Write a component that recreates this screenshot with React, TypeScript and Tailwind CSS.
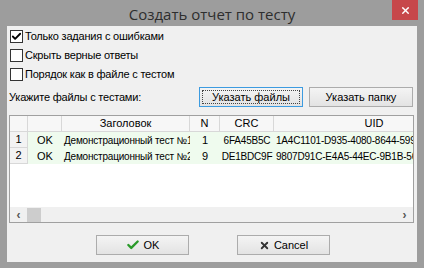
import { Check, X } from "lucide-react"

function CheckRow({ label, checked }: { label: string; checked?: boolean }) {
  return (
    <div className="flex items-center h-[19px] gap-[2px]">
      <div className="w-[13px] h-[13px] border border-[#333] bg-white flex items-center justify-center">
        {checked && <Check className="w-[11px] h-[11px] text-black" strokeWidth={4} />}
      </div>
      <span className="text-[11px] text-black tracking-[-0.2px]">{label}</span>
    </div>
  )
}

const rows = [
  { n: "1", st: "OK", title: "Демонстрационный тест №1", num: "1", crc: "6FA45B5C", uid: "1A4C1101-D935-4080-8644-5999" },
  { n: "2", st: "OK", title: "Демонстрационный тест №2", num: "9", crc: "DE1BDC9F", uid: "9807D91C-E4A5-44EC-9B1B-5647" },
]

export default function App() {
  return (
    <div className="relative w-[424px] h-[268px] bg-[#9d9d9d] flex flex-col" style={{ fontFamily: "'Liberation Sans', Arial, sans-serif" }}>
      {/* Заголовок окна */}
      <div className="h-[26px] flex items-center justify-center">
        <span className="text-[15px] text-[#2e2e2e] pt-[2px]" style={{ fontFamily: "'Open Sans', 'Noto Sans', sans-serif" }}>
          Создать отчет по тесту
        </span>
      </div>
      <div className="absolute top-0 right-[6px] w-[26px] h-[20px] bg-[#c7474a] flex items-center justify-center">
        <X className="w-[11px] h-[11px] text-white" strokeWidth={3} />
      </div>

      {/* Клиентская область */}
      <div className="mx-[7px] h-[236px] bg-[#f0f0f0] flex flex-col">
        <div className="pl-[3px] pt-[1px] flex flex-col">
          <CheckRow label="Только задания с ошибками" checked />
          <CheckRow label="Скрыть верные ответы" />
          <CheckRow label="Порядок как в файле с тестом" />
        </div>

        <div className="flex items-center mt-[3px] pl-[2px] h-[20px]">
          <span className="text-[11px] text-black flex-1 tracking-[-0.2px]">Укажите файлы с тестами:</span>
          <button className="w-[104px] h-[20px] border border-[#3c9be0] bg-gradient-to-b from-[#f4f4f4] to-[#e3e3e3] p-[2px]">
            <div className="w-full h-full border border-dotted border-[#444] flex items-center justify-center text-[11px] text-black">
              Указать файлы
            </div>
          </button>
          <button className="w-[104px] h-[20px] ml-[6px] mr-[4px] border border-[#acacac] bg-gradient-to-b from-[#f4f4f4] to-[#e3e3e3] flex items-center justify-center text-[11px] text-black">
            Указать папку
          </button>
        </div>

        {/* Таблица */}
        <div className="mt-[8px] ml-[2px] w-[405px] h-[108px] border border-[#a0a0a0] bg-white flex flex-col overflow-hidden">
          <div className="flex h-[16px] bg-[#f7f7f7] border-b border-[#d8d8d8] text-[11px] text-black">
            <div className="w-[18px] shrink-0 border-r border-[#d8d8d8]" />
            <div className="w-[34px] shrink-0 border-r border-[#d8d8d8]" />
            <div className="w-[128px] shrink-0 border-r border-[#d8d8d8] flex items-center justify-center">Заголовок</div>
            <div className="w-[30px] shrink-0 border-r border-[#d8d8d8] flex items-center justify-center">N</div>
            <div className="w-[54px] shrink-0 border-r border-[#d8d8d8] flex items-center justify-center">CRC</div>
            <div className="w-[200px] shrink-0 flex items-center justify-center">UID</div>
          </div>
          {rows.map((r) => (
            <div key={r.n} className="flex h-[16px] text-[11px] text-black whitespace-nowrap">
              <div className="w-[18px] shrink-0 bg-[#f3f3f3] border-r border-b border-[#d8d8d8] flex items-center justify-center">{r.n}</div>
              <div className="w-[34px] shrink-0 bg-[#effbee] flex items-center justify-center">{r.st}</div>
              <div className="w-[128px] shrink-0 bg-[#effbee] flex items-center pl-[2px] text-[10px] tracking-[-0.2px]">{r.title}</div>
              <div className="w-[30px] shrink-0 bg-[#effbee] flex items-center justify-center">{r.num}</div>
              <div className="w-[54px] shrink-0 bg-[#effbee] flex items-center justify-center text-[10px] tracking-[-0.2px]">{r.crc}</div>
              <div className="w-[147px] shrink-0 bg-[#effbee] flex items-center pl-[2px] text-[10px] tracking-[-0.2px]">{r.uid}</div>
            </div>
          ))}
          <div className="flex-1" />
          <div className="h-[15px] bg-[#f0f0f0] flex items-center">
            <div className="w-[17px] flex items-center justify-center text-[12px] font-bold text-[#555]">‹</div>
            <div className="w-[14px] h-[14px] bg-[#cdcdcd]" />
            <div className="flex-1" />
            <div className="w-[17px] flex items-center justify-center text-[12px] font-bold text-[#555]">›</div>
          </div>
        </div>

        {/* Кнопки */}
        <div className="flex justify-center gap-[48px] mt-[12px] pl-[2px]">
          <button className="w-[93px] h-[20px] border border-[#acacac] bg-gradient-to-b from-[#f4f4f4] to-[#e3e3e3] flex items-center justify-center gap-[4px] text-[11px] text-black">
            <Check className="w-[14px] h-[14px] text-[#2a9a2a]" strokeWidth={4} />
            OK
          </button>
          <button className="w-[93px] h-[20px] border border-[#acacac] bg-gradient-to-b from-[#f4f4f4] to-[#e3e3e3] flex items-center justify-center gap-[4px] text-[11px] text-black">
            <X className="w-[11px] h-[11px] text-[#333]" strokeWidth={4} />
            Cancel
          </button>
        </div>
      </div>
    </div>
  )
}
